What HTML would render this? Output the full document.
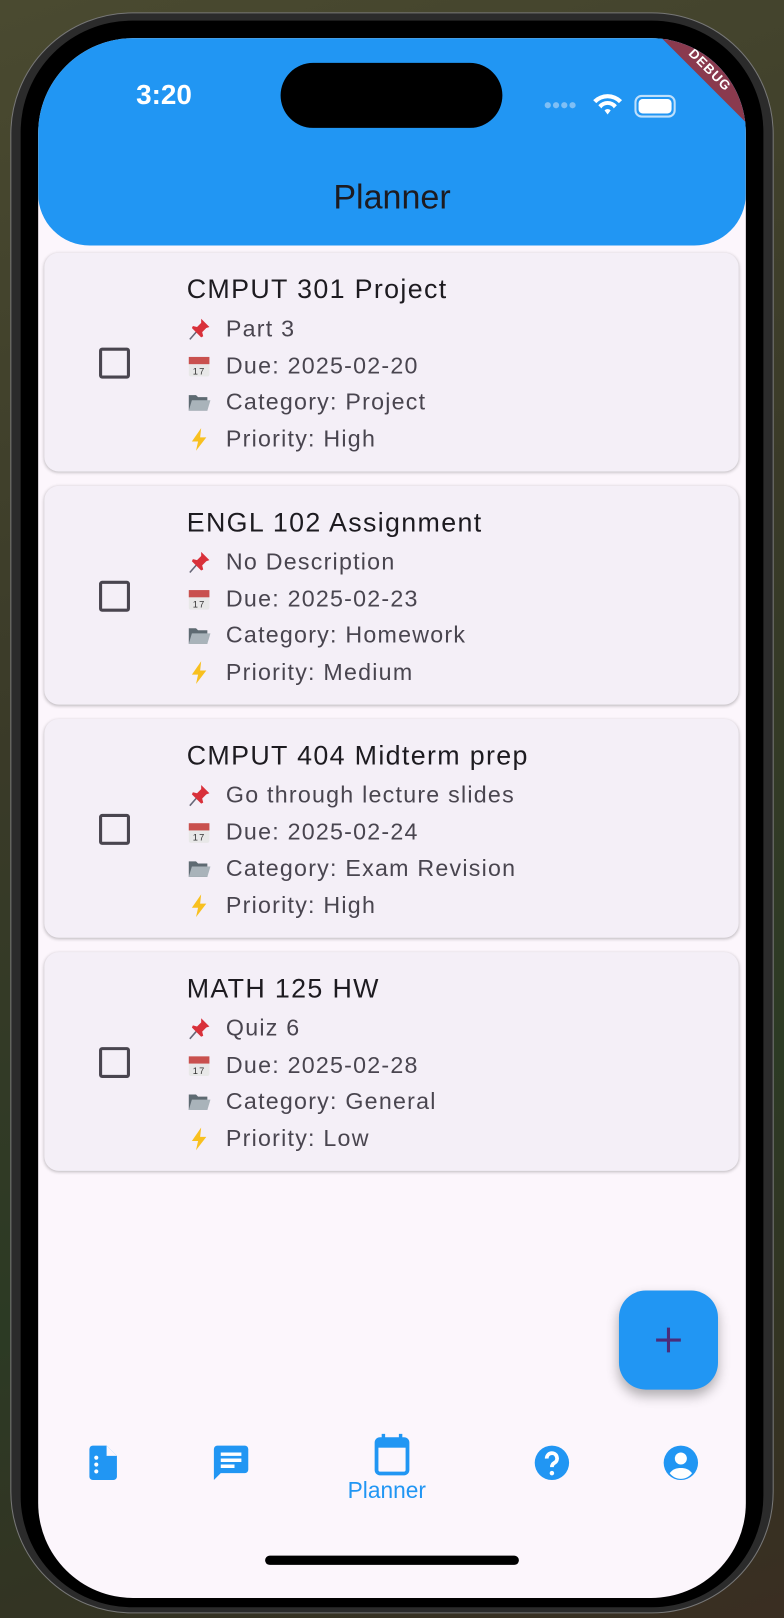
<!DOCTYPE html>
<html><head><meta charset="utf-8"><style>
*{margin:0;padding:0;box-sizing:border-box}
html,body{width:784px;height:1618px;overflow:hidden}
body{background:linear-gradient(160deg,#4a4a30 0%,#3a3a28 40%,#2c3a24 70%,#3a2e22 100%);font-family:"Liberation Sans",sans-serif}
#w{position:absolute;left:0;top:0;width:760px;height:1568px;transform:scale(1.0316);transform-origin:0 0}
.frame{position:absolute;left:10px;top:12px;width:740px;height:1552px;border-radius:118px;background:#2b2b2b;border:1px solid #777}
.black{position:absolute;left:20px;top:20px;width:720px;height:1538px;border-radius:108px;background:#000}
.screen{position:absolute;left:37px;top:37px;width:686px;height:1512px;border-radius:92px;background:#fcf6fc;overflow:hidden}
.hdr{position:absolute;left:0;top:0;width:686px;height:201px;background:#2196f3;border-radius:0 0 50px 50px}
.time{position:absolute;left:95px;top:40px;color:#fff;font-size:27px;font-weight:bold}
.island{position:absolute;left:235px;top:24px;width:215px;height:63px;border-radius:32px;background:#000}
.title{position:absolute;left:0;width:686px;top:135px;text-align:center;font-size:33px;color:#1d1b20}
.debug{position:absolute;right:-40px;top:20px;width:150px;height:22px;background:#8a3a4e;color:#fff;font-size:13px;font-weight:bold;text-align:center;line-height:22px;transform:rotate(45deg);letter-spacing:1px}
.card{position:absolute;left:6px;width:673px;height:212px;background:#f4eff7;border-radius:14px;box-shadow:0 1px 3px rgba(0,0,0,.25)}
.cb{position:absolute;left:53px;top:92px;width:30px;height:30px;border:3px solid #49454f;border-radius:3px}
.ct{position:absolute;left:138px;top:20px;font-size:26px;color:#1d1b20;letter-spacing:1.3px}
.ln{position:absolute;left:138px;font-size:22.5px;color:#49454f;letter-spacing:1.2px;display:flex;align-items:center}
.ln svg{width:24px;height:24px;margin-right:14px}
.fab{position:absolute;width:96px;height:96px;border-radius:26px;background:#2196f3;box-shadow:0 6px 12px rgba(0,0,0,.3)}
.lbl{position:absolute;font-size:22px;color:#2196f3}
.home{position:absolute;width:246px;height:9px;border-radius:5px;background:#000}
</style></head><body><div id="w">
<div class="frame"></div><div class="black"></div>
<div class="screen">
<div class="hdr">
<div class="time">3:20</div>
<div class="island"></div>
<svg style="position:absolute;left:490px;top:52px" width="130" height="26">
<g fill="#7fbff5"><circle cx="4" cy="13" r="3"/><circle cx="12" cy="13" r="3"/><circle cx="20" cy="13" r="3"/><circle cx="28" cy="13" r="3"/></g>
<path d="M48 8a20 20 0 0 1 28 0l-3 3a15 15 0 0 0-22 0z M53 13a12 12 0 0 1 18 0l-3 3a7 7 0 0 0-12 0z M59 18a4 4 0 0 1 6 0l-3 4z" fill="#fff"/>
<rect x="89" y="4" width="38" height="20" rx="6" fill="none" stroke="#bfe0fb" stroke-width="2"/><rect x="92" y="7" width="32" height="14" rx="4" fill="#fff"/>
</svg>
<div class="debug">DEBUG</div>
<div class="title">Planner</div>
</div>
</div>
<div id="cards" style="position:absolute;left:37px;top:0"></div>
<div class="fab" style="left:600px;top:1251px"><svg width="96" height="96"><path d="M48 36v24M36 48h24" stroke="#4a2c7a" stroke-width="3"/></svg></div>
<svg style="position:absolute;left:80px;top:1398px" width="40" height="40" viewBox="0 0 24 24"><path d="M6 2h8l6 6v12a2 2 0 0 1-2 2H6a2 2 0 0 1-2-2V4a2 2 0 0 1 2-2z" fill="#2196f3"/><path d="M14 2v6h6z" fill="#fcf6fc"/><circle cx="8" cy="9" r="1.2" fill="#fff"/><circle cx="8" cy="13" r="1.2" fill="#fff"/><circle cx="8" cy="17" r="1.2" fill="#fff"/></svg>
<svg style="position:absolute;left:204px;top:1398px" width="40" height="40" viewBox="0 0 24 24"><path d="M4 2h16a2 2 0 0 1 2 2v12a2 2 0 0 1-2 2H6l-4 4V4a2 2 0 0 1 2-2z" fill="#2196f3"/><path d="M6 6h12v2H6zM6 9.5h12v2H6zM6 13h8v2H6z" fill="#fff"/></svg>
<svg style="position:absolute;left:360px;top:1388px" width="40" height="44" viewBox="0 0 24 26"><path d="M7 1v4M17 1v4" stroke="#2196f3" stroke-width="2"/><rect x="3" y="4" width="18" height="20" rx="2" fill="none" stroke="#2196f3" stroke-width="2.2"/><rect x="3" y="4" width="18" height="5" fill="#2196f3"/></svg>
<div class="lbl" style="left:337px;top:1432px">Planner</div>
<svg style="position:absolute;left:515px;top:1398px" width="40" height="40" viewBox="0 0 24 24"><circle cx="12" cy="12" r="10" fill="#2196f3"/><path d="M9 9.5a3 3 0 1 1 4.5 2.5c-1 .6-1.5 1.2-1.5 2.5" fill="none" stroke="#fff" stroke-width="2.2"/><circle cx="12" cy="18" r="1.3" fill="#fff"/></svg>
<svg style="position:absolute;left:640px;top:1398px" width="40" height="40" viewBox="0 0 24 24"><circle cx="12" cy="12" r="10" fill="#2196f3"/><circle cx="12" cy="9.5" r="3.5" fill="#fff"/><path d="M5.5 18c2-2.5 4-3 6.5-3s4.5.5 6.5 3a8 8 0 0 1-13 0z" fill="#fff"/></svg>
<div class="home" style="left:257px;top:1508px"></div>
</div>
<script>
var d=[["CMPUT 301 Project","Part 3","2025-02-20","Project","High"],["ENGL 102 Assignment","No Description","2025-02-23","Homework","Medium"],["CMPUT 404 Midterm prep","Go through lecture slides","2025-02-24","Exam Revision","High"],["MATH 125 HW","Quiz 6","2025-02-28","General","Low"]];
var pin='<svg viewBox="0 0 24 24"><path d="M3 22l7-8" stroke="#667" stroke-width="1.5"/><path d="M14 2l8 8-3 1-4 4 1 4-2 1-9-9 1-2 4 1 4-4z" fill="#d9303a"/></svg>';
var cal='<svg viewBox="0 0 24 24"><rect x="2" y="3" width="20" height="19" rx="2" fill="#e8e8e8"/><rect x="2" y="3" width="20" height="7" fill="#c9504e"/><text x="12" y="20" font-size="9" text-anchor="middle" fill="#333" font-family="Liberation Sans">17</text></svg>';
var fol='<svg viewBox="0 0 24 24"><path d="M2 5h7l2 2h9v13H2z" fill="#5e6a72"/><path d="M5 10h18l-3 10H2z" fill="#a9b3ba"/></svg>';
var bolt='<svg viewBox="0 0 24 24"><path d="M14 1L5 14h6l-2 9 10-13h-6z" fill="#f8c01f"/></svg>';
var h='';for(var i=0;i<4;i++){var c=d[i],t=245+i*226;
h+='<div class="card" style="top:'+t+'px"><div class="cb"></div><div class="ct">'+c[0]+'</div>'+
'<div class="ln" style="top:61px">'+pin+c[1]+'</div><div class="ln" style="top:97px">'+cal+'Due: '+c[2]+'</div><div class="ln" style="top:132px">'+fol+'Category: '+c[3]+'</div><div class="ln" style="top:168px">'+bolt+'Priority: '+c[4]+'</div></div>';}
document.getElementById('cards').innerHTML=h;
</script>
</div></body></html>
